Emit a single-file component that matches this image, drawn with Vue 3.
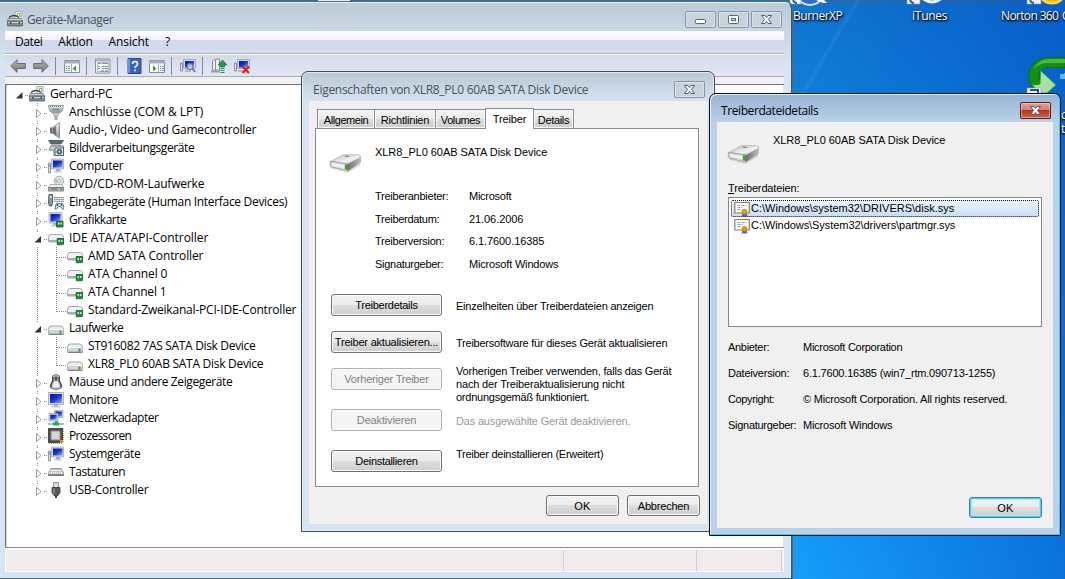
<template>
  <div class="desktop">
    <svg class="wallpaper" width="1065" height="579">
      <path d="M800 93 L856 0 L860 0 L806 93Z" fill="#fff" opacity=".05" />
      <path d="M318 0h32v2h-32z" fill="#e8ecf0" />
      <!-- cut off shortcut icons -->
      <circle cx="810" cy="-9" r="14" fill="#2a6fd0" stroke="#dfe8f4" stroke-width="2" />
      <path d="M816 0h8l3 3-4 0z" fill="#fff" />
      <circle cx="932" cy="-11" r="13" fill="#3f8be0" stroke="#eef3f8" stroke-width="3" />
      <circle cx="1052" cy="-11" r="14" fill="#f0b400" stroke="#ffd84a" stroke-width="3" />
      <g fill="#f4f6f8" stroke="#8c99a8" stroke-width=".6">
        <path d="M790 -8h11v12h-11z M907 -8h13v12h-13z M1027 -8h14v12h-14z" />
      </g>
      <path d="M910 0q1 3 4 3 M1030 0q1 3 4 3 M793 0q1 3 4 3" stroke="#2a5fa8" stroke-width="2" fill="none" />
      <!-- green arrow -->
      <path d="M1065 57.500h-14c-14 0-22 7-22 19 0 7 3 12 8 15l4 1 14-7-15-13-1 8c-2-5 0-13 8-13h18z" fill="#159114" stroke="#0d6a0e" stroke-width=".8" />
      <path d="M1065 59h-14c-9 0-15 4-17 10 5-5 9-6 16-6h15z" fill="#63c94b" opacity=".7" />
      <path d="M1040.500 70.500l15.500 14.500-9 8h-9l-6-9q3 2 8 0z" fill="#a9dfa6" stroke="#1d9a1a" stroke-width=".8" />
      <path d="M1060 74q2 1 5-1v6h-5z" fill="#69b8f4" />
      <path d="M1027 88h14v8h-14z" fill="#f4f6f8" stroke="#8c99a8" stroke-width=".6" />
      <path d="M1030 90h8v3" fill="none" stroke="#1f4f96" stroke-width="2" />
    </svg>
    <span class="shortcut s1" v-fit="49">BurnerXP</span>
    <span class="shortcut s2" v-fit="35">iTunes</span>
    <span class="shortcut s3" v-fit="57">Norton 360</span>
    <span class="shortcut s4">C</span>
    <span class="shortcut s5">c</span>
    <span class="shortcut s6">t</span>

    <!-- Geräte-Manager -->
    <div class="window manager">
      <div class="titlebar">
        <svg class="ico" width="16" height="16"><use href="#i-pc" /></svg>
        <span class="title" v-fit="86">Geräte-Manager</span>
        <div class="caption">
          <span class="cbtn"><svg width="31" height="17"><rect x="10.500" y="8.500" width="10" height="4" rx="1" fill="#fff" stroke="#5a6372" /></svg></span>
          <span class="cbtn"><svg width="31" height="17"><rect x="10.500" y="4.500" width="10" height="8" rx="1" fill="#fff" stroke="#5a6372" /><rect x="13.500" y="7.500" width="4" height="2" fill="#dfe7ef" stroke="#5a6372" /></svg></span>
          <span class="cbtn"><svg width="31" height="17"><use href="#i-x" /></svg></span>
        </div>
      </div>
      <div class="menubar">
        <span v-for="m in menus" :key="m.t" v-fit="m.w">{{ m.t }}</span>
      </div>
      <div class="toolbar">
        <template v-for="(t, i) in tools" :key="i">
          <span v-if="t === '|'" class="sep"></span>
          <svg v-else class="tool" :class="t" width="16" height="16"><use :href="'#i-' + t" /></svg>
        </template>
      </div>
      <div class="treebox">
        <div v-for="n in tree" :key="n.t" class="node">
          <svg v-if="n.l === 0" width="22" height="18">
            <path d="M15.500 7v6.500h-6.500z" fill="#333" /><path d="M18 10.500h4" class="dots" />
          </svg>
          <svg v-else :width="n.l === 1 ? 41 : 60" height="18">
            <path v-if="!n.end" d="M30.500 0v18" class="dots" />
            <path v-if="n.end && n.l === 1" d="M30.500 0v8" class="dots" />
            <template v-if="n.l === 1">
              <path d="M27 4h8v13h-8z" fill="#fff" />
              <path v-if="n.open" d="M34 7v6.500h-6.500z" fill="#333" />
              <path v-else d="M29.500 6.500v8l4.500-4z" fill="#fff" stroke="#999" />
              <path d="M37 10.500h4" class="dots" />
            </template>
            <template v-else>
              <path :d="n.last ? 'M49.500 0v11' : 'M49.500 0v18'" class="dots" />
              <path d="M50 10.500h10" class="dots" />
            </template>
          </svg>
          <svg class="ico" width="16" height="18"><use :href="'#i-' + n.i" y="1" /></svg>
          <span class="label" v-fit="n.w">{{ n.t }}</span>
        </div>
      </div>
      <div class="statusbar"><i class="a"></i><i class="b"></i><i class="c"></i></div>
    </div>

    <!-- Eigenschaften -->
    <div class="window props">
      <div class="titlebar">
        <span class="title" v-fit="275">Eigenschaften von XLR8_PL0 60AB SATA Disk Device</span>
        <span class="cbtn"><svg width="31" height="17"><use href="#i-x" /></svg></span>
      </div>
      <div class="client">
        <div class="tabs">
          <span v-for="t in tabs" :key="t.t" class="tab" :class="[t.c, { active: t.on }]"><b v-fit="t.w">{{ t.t }}</b></span>
        </div>
        <div class="page">
          <div class="head">
            <svg width="34" height="20"><use href="#i-bigdrive" /></svg>
            <span v-fit="172">XLR8_PL0 60AB SATA Disk Device</span>
          </div>
          <div v-for="f in fields" :key="f.k" class="field">
            <span class="key"><b v-fit="f.kw">{{ f.k }}</b></span>
            <span v-fit="f.vw">{{ f.v }}</span>
          </div>
          <div class="actions">
            <template v-for="a in actions" :key="a.b">
              <button class="btn" :disabled="a.off"><b v-fit="a.w">{{ a.b }}</b></button>
              <div class="desc" :class="[a.c, { off: a.grey }]">
                <div v-for="d in a.d" :key="d.t"><b v-fit="d.w">{{ d.t }}</b></div>
              </div>
            </template>
          </div>
        </div>
        <div class="footer">
          <button class="btn"><b v-fit="16">OK</b></button>
          <button class="btn"><b v-fit="51">Abbrechen</b></button>
        </div>
      </div>
    </div>

    <!-- Treiberdateidetails -->
    <div class="window details">
      <div class="titlebar">
        <span class="title" v-fit="97">Treiberdateidetails</span>
        <span class="cbtn red"><svg width="31" height="17"><use href="#i-x" /></svg></span>
      </div>
      <div class="client">
        <div class="head">
          <svg width="34" height="20"><use href="#i-bigdrive" /></svg>
          <span v-fit="172">XLR8_PL0 60AB SATA Disk Device</span>
        </div>
        <div class="listlabel"><span v-fit="71"><u>T</u>reiberdateien:</span></div>
        <div class="filelist">
          <div v-for="f in files" :key="f.t" class="file" :class="{ selected: f.sel }">
            <svg width="16" height="16"><use href="#i-cert" /></svg>
            <span v-fit="f.w">{{ f.t }}</span>
          </div>
        </div>
        <div v-for="f in info" :key="f.k" class="field">
          <span class="key"><b v-fit="f.kw">{{ f.k }}</b></span>
          <span v-fit="f.vw">{{ f.v }}</span>
        </div>
        <div class="footer">
          <button class="btn default"><b v-fit="16">OK</b></button>
        </div>
      </div>
    </div>

    <!-- icon sprite -->
    <svg class="sprite" width="0" height="0">
      <defs>
        <linearGradient id="g-metal" x1="0" y1="0" x2="0" y2="1"><stop offset="0" stop-color="#f4f4f4" /><stop offset="1" stop-color="#8f9396" /></linearGradient>
        <linearGradient id="g-screen" x1="0" y1="0" x2="1" y2="1"><stop offset="0" stop-color="#0812a0" /><stop offset=".5" stop-color="#1c35d0" /><stop offset="1" stop-color="#8fb0f4" /></linearGradient>
        <linearGradient id="g-arrow" x1="0" y1="0" x2="0" y2="1"><stop offset="0" stop-color="#bdbdbd" /><stop offset="1" stop-color="#6e6e6e" /></linearGradient>

        <symbol id="i-x" viewBox="0 0 31 17">
          <path d="M10.500 4.500h3.500l1.500 2 1.500-2h3.500l-3 4 3 4h-3.500l-1.500-2-1.500 2h-3.500l3-4z" fill="#fff" stroke="#535b69" />
        </symbol>
        <symbol id="i-pc" viewBox="0 0 16 16">
          <path d="M8 .5h6v7h-6z" fill="#f3f6ee" stroke="#a8aca6" /><path d="M10 2h3v4h-3z" fill="#8fbe62" /><path d="M11 3h1v4h-1z" fill="#fff" />
          <path d="M2 6.500q5-4 10 0" fill="none" stroke="#40464a" stroke-width="1.300" />
          <path d="M1 7.500h13l1.500 2.500H.5z" fill="#c6cbce" stroke="#7b8286" stroke-width=".8" />
          <path d="M.5 10h15v5H.5z" fill="#81898e" stroke="#596166" stroke-width=".8" />
          <path d="M1 11.500h14" stroke="#cfd4d7" /><path d="M3 11h1.500v2H3zM11.500 11H13v2h-1.500z" fill="#4c5459" />
        </symbol>
        <symbol id="i-port" viewBox="0 0 16 16">
          <path d="M.5 1.500h15l-1 5-2 2h-9l-2-2z" fill="url(#g-metal)" stroke="#8d9498" stroke-width=".9" />
          <path d="M2 2.500h12" stroke="#697074" stroke-dasharray="1 1" /><path d="M4 4.500h8l-.5 2h-7z" fill="#7f8d96" />
          <path d="M5 8.500h6l-1.500 4h-3z" fill="#c3c8cb" stroke="#8d9498" stroke-width=".8" /><path d="M6.500 12.500h3V16h-3z" fill="#a3a8ab" />
        </symbol>
        <symbol id="i-speaker" viewBox="0 0 16 16">
          <path d="M2 5.500h2.500v6H2z" fill="#6d7377" /><path d="M4.500 5.500L11.500.5v15.500l-7-4.500z" fill="url(#g-metal)" stroke="#83888c" stroke-width=".8" />
          <path d="M5 6l3-2v9l-3-2z" fill="#4c5256" opacity=".7" />
        </symbol>
        <symbol id="i-camera" viewBox="0 0 16 16">
          <path d="M.5.500h15l-2.500 3.500h-10z" fill="#5d6a72" stroke="#49545b" stroke-width=".8" /><path d="M3 4.500h10v1.500H3z" fill="#b2bac0" />
          <path d="M3 6h12.500v9.500H6V10H1z" fill="#d5dade" stroke="#69757c" stroke-width=".9" /><path d="M7 8h8.500v7.500H7z" fill="#e1e6ea" stroke="#56646d" />
          <circle cx="11.300" cy="11.700" r="2.700" fill="#445c6d" /><circle cx="11.300" cy="11.700" r="1.100" fill="#b8d7ec" />
        </symbol>
        <symbol id="i-computer" viewBox="0 0 16 16">
          <path d="M.5 5h2v10h-2z" fill="#dfe3e6" stroke="#7f878d" stroke-width=".8" /><path d="M1 6.500h1.500v2H1z" fill="#3fae45" />
          <path d="M3.500 1h12v10h-12z" fill="#d4dae2" stroke="#a2abb6" stroke-width=".8" /><path d="M5 2.500h9.500v7H5z" fill="url(#g-screen)" />
          <path d="M8 11h4v2H8z" fill="#a5abb1" /><path d="M6 13h8v1.500H6z" fill="#c9ced3" />
        </symbol>
        <symbol id="i-dvd" viewBox="0 0 16 16">
          <circle cx="11" cy="5" r="4.700" fill="#dce3df" stroke="#98a29d" stroke-width=".8" /><circle cx="11" cy="5" r="1.500" fill="#fff" stroke="#8d9691" stroke-width=".6" /><path d="M7 3l3 1.500L8 7z" fill="#93c884" />
          <path d="M2 8.500h12l1.500 3H.5z" fill="#eceeee" stroke="#969c9d" stroke-width=".7" /><path d="M.5 11.500h15v3.500H.5z" fill="#b7bcbd" stroke="#6f7778" stroke-width=".9" />
          <path d="M2.500 13h7" stroke="#545c5d" /><path d="M12.500 12h1.500v2h-1.500z" fill="#35a336" />
        </symbol>
        <symbol id="i-hid" viewBox="0 0 16 16">
          <path d="M1 .5h3.500v9l-1 2.500h-2L.5 9z" fill="#93999d" stroke="#464d52" stroke-width=".9" /><path d="M2 2h1.500v2H2z" fill="#eee" />
          <path d="M6 3h10v5H6z" fill="#dfe2e4" /><path d="M6 3.500h10M6 5.500h10M6 7.500h10" stroke="#747b80" stroke-dasharray="1.500 .8" stroke-width=".9" />
          <path d="M7 15l1-5q1-1.500 2.500-.5h2q2-1 2.500.5l1 5q-1.500 1-2.500-1l-1-1.500h-2l-1 1.500q-1 2-2.500 1z" fill="#d0e3ec" stroke="#567080" stroke-width=".9" /><circle cx="9.500" cy="11" r=".9" fill="#345" /><circle cx="13.500" cy="11" r=".9" fill="#345" />
        </symbol>
        <symbol id="i-chip" viewBox="0 0 8 8">
          <path d="M.5.500h6.500v6H.5z" fill="#1f8b4b" stroke="#0e5c30" stroke-width=".8" /><path d="M2 2h1.500v2H2zM4.500 2H6v2H4.500z" fill="#bff0c8" /><path d="M1 7.300h5" stroke="#d6b84a" stroke-dasharray="1 .6" />
        </symbol>
        <symbol id="i-gpu" viewBox="0 0 16 16">
          <path d="M1 .5h13v10.500H1z" fill="#d4dae2" stroke="#a2abb6" stroke-width=".8" /><path d="M2.500 2h10v7.500h-10z" fill="url(#g-screen)" />
          <path d="M5 11h4v2H5z" fill="#a5abb1" /><path d="M3 13h7v1.500H3z" fill="#c9ced3" /><use href="#i-chip" x="8" y="8.500" width="8" height="8" />
        </symbol>
        <symbol id="i-ide" viewBox="0 0 16 16">
          <path d="M3 4.500h10.500q2 .5 2 3v3.500q0 1-1 1H1.500q-1 0-1-1V7.500q0-3 2.500-3z" fill="#f0f1f1" stroke="#999fa1" stroke-width=".9" />
          <path d="M1 10h14v2H1z" fill="#a7adaf" /><use href="#i-chip" x="8.500" y="8" width="8" height="8" />
        </symbol>
        <symbol id="i-drive" viewBox="0 0 16 16">
          <path d="M3 6h10q2.500.5 2.500 3.500v4q0 1-1 1H1.500q-1 0-1-1V9.500q0-3.500 2.500-3.500z" fill="#ececec" stroke="#999ea0" stroke-width=".9" />
          <path d="M.8 9.500h14.500v4.200H.8z" fill="#d3d6d7" /><path d="M.8 9.500h14.500" stroke="#fff" stroke-width=".7" /><path d="M.7 14.200h14.600" stroke="#6d7375" /><path d="M11.500 10.500h2v3h-2z" fill="#3c9b36" />
        </symbol>
        <symbol id="i-mouse" viewBox="0 0 16 16">
          <path d="M4.500 2Q8-1 11.500 2v5q3 4 2 7-5.500 3-11 0-1-3 2-7z" fill="#c5c9cc" stroke="#6b7175" /><path d="M6.500 2.500h3v4h-3z" fill="#4b5155" /><path d="M5 3v4q-3 4-1.500 6M11 3v4q3 4 1.500 6" stroke="#34393c" stroke-width="1.200" fill="none" /><path d="M6 8h4l1 5H5z" fill="#f3f4f5" />
        </symbol>
        <symbol id="i-monitor" viewBox="0 0 16 16">
          <path d="M.5.500h15v12H.5z" fill="#d9dde2" stroke="#9aa2ac" stroke-width=".8" /><path d="M2 2h12v9H2z" fill="url(#g-screen)" /><path d="M6 12.500h4v1.500H6z" fill="#a5abb1" /><path d="M3.500 14h9v1.500h-9z" fill="#c3c8cd" />
        </symbol>
        <symbol id="i-net" viewBox="0 0 16 16">
          <path d="M6.500.500h8.500v7H6.500z" fill="#d9dde2" stroke="#9aa2ac" stroke-width=".8" /><path d="M7.500 1.500H14v5H7.500z" fill="url(#g-screen)" />
          <path d="M1 3.500h9v7.500H1z" fill="#e3e7eb" stroke="#9aa2ac" stroke-width=".8" /><path d="M2.200 4.700h6.600v5H2.200z" fill="url(#g-screen)" />
          <path d="M7 11h2.500v2H7z" fill="#2b9f6c" /><path d="M0 14h16" stroke="#8fd0b2" stroke-width="2" /><path d="M5 12.500h6v3H5z" fill="#23a36a" />
        </symbol>
        <symbol id="i-cpu" viewBox="0 0 16 16">
          <path d="M0 0h15v15H0z" fill="#4b4b4b" /><path d="M1 15.500h14M15.500 1v14" stroke="#bd9a45" stroke-dasharray="1 1" /><path d="M3 3h9v9H3z" fill="#d4d4d4" stroke="#8b8b8b" /><path d="M12 12h3v3h-3z" fill="#d39a2c" />
        </symbol>
        <symbol id="i-keyboard" viewBox="0 0 16 16">
          <path d="M3 4.500h10l2.500 4v3H.5v-3z" fill="#eceded" stroke="#8c9194" stroke-width=".9" /><path d="M3.500 5.500h9.500M2.500 7.500h11.500M2 9.200h12.500" stroke="#9a9fa2" stroke-dasharray="1 1" /><path d="M.5 11h15" stroke="#666c6f" stroke-width="1.500" />
        </symbol>
        <symbol id="i-usb" viewBox="0 0 16 16">
          <path d="M5.500.500h5v5h-5z" fill="#dedede" stroke="#969696" /><path d="M4 5.500h8v5l-2 3H6l-2-3z" fill="#575757" stroke="#3b3b3b" stroke-width=".8" /><path d="M7 13h2v3H7z" fill="#3d3d3d" /><path d="M5 6.500h2v5H5z" fill="#9a9a9a" opacity=".7" />
        </symbol>
        <symbol id="i-back" viewBox="0 0 16 16"><path d="M.7 8L7 1.700v3.800h8.300v5H7v3.800z" fill="url(#g-arrow)" stroke="#6d6d6d" /></symbol>
        <symbol id="i-fwd" viewBox="0 0 16 16"><path d="M15.300 8L9 1.700v3.800H.7v5H9v3.800z" fill="url(#g-arrow)" stroke="#6d6d6d" /></symbol>
        <symbol id="i-tree" viewBox="0 0 16 16">
          <path d="M.5 2.500h15v12H.5z" fill="#fbfcfc" stroke="#858c92" /><path d="M0 4h16" stroke="#a6acb0" stroke-width="3" /><path d="M7.500 6v8" stroke="#a6acb0" /><path d="M2 8.500h4M2 10.500h4M2 12.500h4" stroke="#5f88a9" stroke-dasharray="1 1 2" /><path d="M12 7.500v6L8.500 10.500z" fill="#3aa52f" />
        </symbol>
        <symbol id="i-pane" viewBox="0 0 16 16">
          <path d="M.5 2.500h15v12H.5z" fill="#fbfcfc" stroke="#858c92" /><path d="M0 4h16" stroke="#a6acb0" stroke-width="3" /><path d="M9.500 6v8" stroke="#a6acb0" /><path d="M11 8.500h4M11 10.500h4M11 12.500h4" stroke="#5f88a9" stroke-dasharray="1 1 2" /><path d="M4 7.500v6l3.500-3z" fill="#3aa52f" />
        </symbol>
        <symbol id="i-sheet" viewBox="0 0 16 16">
          <path d="M.5 1h14.500v14H.5z" fill="#f7f8f9" stroke="#8b9298" /><path d="M1 2.500h13.500" stroke="#a9afb4" stroke-width="2" /><path d="M3 5.500h3M7 5.500h6M3 8.500h2M7 8.500h6M3 10.500h2M7 10.500h6" stroke="#699bc0" /><path d="M2.500 4.500h11v9h-11z" fill="none" stroke="#b6bcc1" /><path d="M6 13h3M10 13h3" stroke="#8b9298" stroke-width="1.500" />
        </symbol>
        <symbol id="i-help" viewBox="0 0 16 16">
          <path d="M1 .5h13v15H1z" fill="#3c62c4" stroke="#2b4794" /><path d="M2 1v14" stroke="#88a4e4" stroke-width="1.500" /><path d="M5.500 6q0-2.500 2.500-2.500T10.500 6q0 1.200-1.300 2T8 10M8 11.500v1.800" fill="none" stroke="#fff" stroke-width="1.600" />
        </symbol>
        <symbol id="i-scan" viewBox="0 0 16 16">
          <path d="M.5 5h2v8h-2z" fill="#dfe3e6" stroke="#7f878d" stroke-width=".9" /><path d="M3.500 1.500h12v9h-12z" fill="#d4dae2" stroke="#a3acb6" /><path d="M5 3h9v6.500H5z" fill="url(#g-screen)" /><path d="M5 13h6" stroke="#a5abb1" stroke-width="1.500" />
          <circle cx="10" cy="8.500" r="3" fill="#cfe4f7" fill-opacity=".7" stroke="#66788a" stroke-width="1.100" /><path d="M12.200 10.700l3 3.300" stroke="#6f7b86" stroke-width="1.800" />
        </symbol>
        <symbol id="i-update" viewBox="0 0 16 16">
          <path d="M1.500 3q2-2.500 7-2v11h-7z" fill="#eef0f1" stroke="#858d92" /><path d="M4.500 2v10" stroke="#858d92" /><path d="M0 13.500h9" stroke="#959da1" stroke-width="2" />
          <path d="M11.500 2l4.500 5h-2.500v2h-4V7H7z" fill="#1f9c55" stroke="#0f6c36" stroke-width=".6" /><path d="M9.500 10.500h4M9.500 12.500h4M9.500 14.500h4" stroke="#1f9c55" />
        </symbol>
        <symbol id="i-remove" viewBox="0 0 16 16">
          <path d="M.5 5h2v8h-2z" fill="#dfe3e6" stroke="#7f878d" stroke-width=".9" /><path d="M3.500 1.500h12v9h-12z" fill="#d4dae2" stroke="#a3acb6" /><path d="M5 3h9v6.500H5z" fill="url(#g-screen)" /><path d="M4 13h6" stroke="#a5abb1" stroke-width="1.500" />
          <path d="M8.500 8.500l6.500 6.500M15 8.500l-6.500 6.500" stroke="#e0201c" stroke-width="2.200" />
        </symbol>
        <symbol id="i-cert" viewBox="0 0 16 16">
          <path d="M.8 1.500h14.500v10.500H.8z" fill="#fffefa" stroke="#9b7b5a" stroke-width="1.200" /><path d="M3.500 4.500h9M3.500 6.500h5M3.500 8.500h4" stroke="#8b9bb8" stroke-dasharray="3 1" /><path d="M8.500 12l-1 4 2-1 1 1 1-1 2 1-1-4z" fill="#3b6bc4" /><circle cx="10.500" cy="10.800" r="2.600" fill="#dca11a" stroke="#a8740c" stroke-width=".6" />
        </symbol>
        <linearGradient id="g-top" x1="0" y1="0" x2="1" y2="1"><stop offset="0" stop-color="#b5b5b5" /><stop offset=".6" stop-color="#f4f4f4" /><stop offset="1" stop-color="#b5b5b5" /></linearGradient>
        <linearGradient id="g-side" x1="0" y1="0" x2="1" y2="0"><stop offset="0" stop-color="#707070" /><stop offset="1" stop-color="#bdbdbd" /></linearGradient>
        <symbol id="i-bigdrive" viewBox="0 0 34 20">
          <path d="M2 14l16 4.500 13-8v2L18.500 20 2 15.500z" fill="#999" opacity=".35" />
          <path d="M1.500 8.500L13 2.500q1.500-.8 3-.8h13q2 .3 3 2.300L19 11z" fill="url(#g-top)" stroke="#a4a4a4" stroke-width=".6" />
          <path d="M1.300 9q0-.8 1-.6L19 11v7L2.300 14q-1-.3-1-1.200z" fill="#d6d6da" stroke="#8b8d90" stroke-width=".7" /><path d="M3 10l12 2v3.500L3 12.500z" fill="#f1f1f6" />
          <path d="M19 11l13-7v5q0 .8-.8 1.300L19 18z" fill="url(#g-side)" /><path d="M16 11.200l3 .4v5.400l-3-.8z" fill="#459c2c" /><ellipse cx="18" cy="3.200" rx="2.500" ry=".8" fill="#8b8b8b" />
        </symbol>
      </defs>
    </svg>
  </div>
</template>

<script setup>
// stretches or tightens a label to a fixed pixel width
const vFit = {
  mounted(el, { value }) {
    const n = el.textContent.length
    const w = el.getBoundingClientRect().width
    el.style.letterSpacing = ((value + 0.3 - w) / n).toFixed(3) + 'px'
  }
}

const menus = [
  { t: 'Datei', w: 27 },
  { t: 'Aktion', w: 34 },
  { t: 'Ansicht', w: 40 },
  { t: '?', w: 6 }
]

const tools = ['back', 'fwd', '|', 'tree', '|', 'sheet', '|', 'help', 'pane', '|', 'scan', '|', 'update', 'remove']

const tree = [
  { l: 0, i: 'pc', t: 'Gerhard-PC', w: 62 },
  { l: 1, i: 'port', t: 'Anschlüsse (COM & LPT)', w: 134 },
  { l: 1, i: 'speaker', t: 'Audio-, Video- und Gamecontroller', w: 187 },
  { l: 1, i: 'camera', t: 'Bildverarbeitungsgeräte', w: 125 },
  { l: 1, i: 'computer', t: 'Computer', w: 54 },
  { l: 1, i: 'dvd', t: 'DVD/CD-ROM-Laufwerke', w: 135 },
  { l: 1, i: 'hid', t: 'Eingabegeräte (Human Interface Devices)', w: 218 },
  { l: 1, i: 'gpu', t: 'Grafikkarte', w: 57 },
  { l: 1, i: 'ide', t: 'IDE ATA/ATAPI-Controller', w: 139, open: true },
  { l: 2, i: 'ide', t: 'AMD SATA Controller', w: 115 },
  { l: 2, i: 'ide', t: 'ATA Channel 0', w: 79 },
  { l: 2, i: 'ide', t: 'ATA Channel 1', w: 78 },
  { l: 2, i: 'ide', t: 'Standard-Zweikanal-PCI-IDE-Controller', w: 208, last: true },
  { l: 1, i: 'drive', t: 'Laufwerke', w: 54, open: true },
  { l: 2, i: 'drive', t: 'ST916082 7AS SATA Disk Device', w: 167 },
  { l: 2, i: 'drive', t: 'XLR8_PL0 60AB SATA Disk Device', w: 175, last: true },
  { l: 1, i: 'mouse', t: 'Mäuse und andere Zeigegeräte', w: 163 },
  { l: 1, i: 'monitor', t: 'Monitore', w: 49 },
  { l: 1, i: 'net', t: 'Netzwerkadapter', w: 89 },
  { l: 1, i: 'cpu', t: 'Prozessoren', w: 62 },
  { l: 1, i: 'computer', t: 'Systemgeräte', w: 71 },
  { l: 1, i: 'keyboard', t: 'Tastaturen', w: 56 },
  { l: 1, i: 'usb', t: 'USB-Controller', w: 79, end: true }
]

const tabs = [
  { t: 'Allgemein', w: 44, c: 't1' },
  { t: 'Richtlinien', w: 48, c: 't2' },
  { t: 'Volumes', w: 39, c: 't3' },
  { t: 'Treiber', w: 33, c: 't4', on: true },
  { t: 'Details', w: 31, c: 't5' }
]

const fields = [
  { k: 'Treiberanbieter:', kw: 73, v: 'Microsoft', vw: 42 },
  { k: 'Treiberdatum:', kw: 64, v: '21.06.2006', vw: 54 },
  { k: 'Treiberversion:', kw: 69, v: '6.1.7600.16385', vw: 75 },
  { k: 'Signaturgeber:', kw: 68, v: 'Microsoft Windows', vw: 89 }
]

const actions = [
  { b: 'Treiberdetails', w: 62, c: 'd1', d: [{ t: 'Einzelheiten über Treiberdateien anzeigen', w: 197 }] },
  { b: 'Treiber aktualisieren...', w: 103, c: 'd2', d: [{ t: 'Treibersoftware für dieses Gerät aktualisieren', w: 211 }] },
  {
    b: 'Vorheriger Treiber', w: 84, c: 'd3', off: true,
    d: [
      { t: 'Vorherigen Treiber verwenden, falls das Gerät', w: 215 },
      { t: 'nach der Treiberaktualisierung nicht', w: 168 },
      { t: 'ordnungsgemäß funktioniert.', w: 133 }
    ]
  },
  { b: 'Deaktivieren', w: 59, c: 'd4', off: true, grey: true, d: [{ t: 'Das ausgewählte Gerät deaktivieren.', w: 174 }] },
  { b: 'Deinstallieren', w: 62, c: 'd5', d: [{ t: 'Treiber deinstallieren (Erweitert)', w: 147 }] }
]

const files = [
  { t: 'C:\\Windows\\system32\\DRIVERS\\disk.sys', w: 203, sel: true },
  { t: 'C:\\Windows\\System32\\drivers\\partmgr.sys', w: 204 }
]

const info = [
  { k: 'Anbieter:', kw: 41, v: 'Microsoft Corporation', vw: 99 },
  { k: 'Dateiversion:', kw: 61, v: '6.1.7600.16385 (win7_rtm.090713-1255)', vw: 192 },
  { k: 'Copyright:', kw: 46, v: '© Microsoft Corporation. All rights reserved.', vw: 204 },
  { k: 'Signaturgeber:', kw: 68, v: 'Microsoft Windows', vw: 89 }
]
</script>

<style>
html, body {
  margin: 0;
  overflow: hidden;
}
</style>

<style scoped>
.desktop {
  position: relative;
  width: 1065px;
  height: 579px;
  overflow: hidden;
  font: 11px/13px "Liberation Sans", Arial, sans-serif;
  color: #000;
  white-space: nowrap;
  background:
    linear-gradient(90deg, rgba(0, 80, 200, 0) 74%, rgba(0, 70, 190, 0.5) 100%),
    linear-gradient(180deg, #2f6f9f 0, #0f76d0 5px, #1080da 100px, #0f90f2 400px, #169ffa 579px);
}
.desktop * {
  box-sizing: border-box;
}
b {
  font-weight: normal;
  display: inline-block;
}
svg {
  display: block;
  flex: none;
}
.wallpaper, .sprite {
  position: absolute;
  left: 0;
  top: 0;
}
.shortcut {
  position: absolute;
  color: #fff;
  font: 12px/16px "Open Sans", "Noto Sans", sans-serif;
  text-shadow: 1px 1px 2px #000, 0 1px 2px #000;
}
.s1 { left: 793px; top: 8px; }
.s2 { left: 912px; top: 8px; }
.s3 { left: 1001px; top: 8px; }
.s4 { left: 1062px; top: 8px; }
.s5, .s6 { left: 1061px; line-height: 14px; }
.s5 { top: 108px; }
.s6 { top: 122px; }

.window {
  position: absolute;
  display: flex;
  flex-direction: column;
}
.titlebar {
  display: flex;
  align-items: center;
  flex: none;
  font: 12px/16px "Open Sans", "Noto Sans", sans-serif;
  color: #4a525b;
}
.titlebar .title {
  display: inline-block;
}
.cbtn {
  display: block;
  width: 31px;
  height: 17px;
  margin-left: auto;
  border-radius: 2px;
  box-shadow: inset 0 0 0 1px #8796ab, inset 0 0 0 2px rgba(255, 255, 255, 0.35);
  background: #c6d3df;
}

/* device manager */
.manager {
  left: 0;
  top: 2px;
  width: 792px;
  height: 576px;
  padding: 0 8px 0 5px;
  background: linear-gradient(#bccbd8 0, #d7e4f1 60px, #d7e4f1);
  border-right: 1px solid #46525e;
  border-top: 1px solid #e9eff4;
  border-radius: 0 7px 0 0;
  box-shadow: 0 0 0 1px #52687a;
}
.manager .titlebar {
  height: 28px;
  padding-top: 5px;
  padding-left: 2px;
}
.manager .title {
  margin-left: 4px;
}
.manager .ico {
  margin-top: -1px;
}
.caption {
  display: flex;
  gap: 2px;
  margin: -1px 1px 0 auto;
}
.menubar {
  display: flex;
  height: 22px;
  margin-right: -1px;
  padding-left: 10px;
  gap: 16px;
  font: 12px/22px "Open Sans", "Noto Sans", sans-serif;
  background: linear-gradient(#fff 0, #f0f2f9 9px, #d4daed 9px, #d5dbee 100%);
}
.menubar span {
  flex: none;
}
.toolbar {
  display: flex;
  align-items: center;
  height: 24px;
  margin-right: -1px;
  padding: 2px 0 0 5px;
  border-top: 1px solid #aaaeb9;
  border-bottom: 1px solid #a9adb6;
  box-shadow: inset 0 1px #fff;
  background: linear-gradient(#d3d9ed, #e3e7f5);
}
.fwd { margin-left: 7px; }
.sep {
  width: 1px;
  height: 18px;
  margin: 0 8px 0 6px;
  background: #868d98;
}
.help { margin-left: 1px; }
.pane { margin-left: 6px; }
.remove { margin-left: 7px; }
.treebox {
  height: 471px;
  flex: none;
  margin-right: -1px;
  padding: 1px 0 0 1px;
  border-top: 7px solid #f0f0f0;
  background: #fff;
  box-shadow: inset 1px 1px #72767b, inset -1px -1px #e3e3e3, inset 2px 0 #d0d0d0;
}
.node {
  display: flex;
  height: 18px;
  padding-left: 1px;
  font: 12px/18px "Open Sans", "Noto Sans", sans-serif;
}
.node .ico {
  margin-left: 0;
}
.node .label {
  margin-left: 5px;
}
.dots {
  stroke: #8a8a8a;
  stroke-width: 1;
  stroke-dasharray: 1 1;
  fill: none;
}
.statusbar {
  display: flex;
  height: 24px;
  flex: none;
  margin-right: -1px;
  border: solid #fff;
  border-width: 2px 1px 1px;
  background: #f0eceb;
  box-shadow: 0 -1px #8a8c90;
}
.statusbar i {
  width: 1px;
  background: #d2cfce;
}
.statusbar .a { margin-left: 557px; }
.statusbar .b { margin-left: 132px; }
.statusbar .c { margin-left: 84px; }

/* buttons */
.btn {
  display: block;
  height: 22px;
  padding: 1px 0 0;
  border: 1px solid #707070;
  border-radius: 3px;
  font: inherit;
  color: #000;
  background: linear-gradient(#f2f2f2 0, #ebebeb 50%, #dddddd 50%, #cfcfcf 100%);
  box-shadow: inset 0 0 0 1px #fbfbfb;
}
.btn:disabled {
  border-color: #adb2b5;
  background: #f4f4f4;
  color: #838383;
}
.btn.default {
  border-color: #3c7fb1;
  box-shadow: inset 0 0 0 1px #48d0f5, inset 0 0 0 2px #a8e4f6;
}

/* properties */
.props {
  left: 301px;
  top: 71px;
  width: 414px;
  height: 461px;
  padding: 1px 7px 7px 7px;
  border: 1px solid #444d56;
  border-radius: 7px 7px 0 0;
  background: linear-gradient(#b9c8d5 0, #d7e4f1 30px, #d7e4f1);
  box-shadow: inset 0 0 0 1px #e3ebf3;
}
.props .titlebar {
  height: 28px;
  padding: 5px 2px 0 4px;
}
.props .cbtn {
  margin-top: -1px;
}
.props .client {
  display: flex;
  flex-direction: column;
  height: 423px;
  padding: 7px 7px 0 6px;
  background: #f0f0f0;
}
.tabs {
  display: flex;
  align-items: flex-end;
  height: 20px;
  padding-left: 2px;
}
.tab {
  height: 19px;
  border: 1px solid #898c95;
  border-bottom: 0;
  margin-right: -1px;
  background: linear-gradient(#f3f3f3 0, #ebebeb 50%, #dddddd 50%, #cdcdcd 100%);
  text-align: center;
  line-height: 20px;
  box-shadow: inset 0 0 0 1px #f8f8f8;
}
.t1 { width: 58px; }
.t2 { width: 62px; }
.t3 { width: 51px; }
.t4 { width: 49px; }
.t5 { width: 41px; }
.tab.active {
  position: relative;
  height: 21px;
  margin-bottom: -1px;
  background: #fff;
  box-shadow: none;
}
.page {
  height: 359px;
  flex: none;
  padding: 0 0 0 14px;
  margin-right: 1px;
  border: 1px solid #898c95;
  background: #fff;
}
.page .head {
  display: flex;
  align-items: flex-start;
  height: 56px;
  padding-top: 17px;
  margin-bottom: 1px;
}
.page .head svg {
  margin: 7px 0 0 -1px;
}
.page .head span {
  margin-left: 12px;
}
.page .field {
  display: flex;
  height: 22.700px;
  padding: 4px 0 0 45px;
}
.page .key {
  width: 94px;
}
.actions {
  display: grid;
  grid-template-columns: 111px auto;
  grid-template-rows: 37px 37px 41px 41px 22px;
  column-gap: 14px;
  margin-top: 17px;
  padding-left: 1px;
}
.desc { padding-top: 6px; }
.desc.d3 { padding: 0; margin-top: -3px; }
.desc.d5 { padding: 0; margin-top: -2px; }
.desc.off { color: #9a9a9a; }
.props .footer {
  display: flex;
  justify-content: flex-end;
  gap: 8px;
  padding-top: 8px;
}
.props .footer .btn {
  width: 73px;
  height: 21px;
}

/* driver file details */
.details {
  left: 709px;
  top: 93px;
  width: 352px;
  height: 443px;
  padding: 0 7px 7px 7px;
  border: 1px solid #0c1116;
  border-radius: 7px 7px 0 0;
  background: linear-gradient(#98b3d2 0, #b9d1ea 28px, #b9d1ea);
  box-shadow: inset 1px 1px #e6eff8, inset -1px -1px #3fd0e6;
}
.details .titlebar {
  height: 28px;
  padding: 6px 2px 0 4px;
  color: #000;
}
.details .cbtn {
  margin-top: -1px;
}
.cbtn.red {
  background: linear-gradient(#e5a99c 0, #d4796a 50%, #b8351c 50%, #cf6a50 100%);
  box-shadow: inset 0 0 0 1px #5b1f1a, inset 0 0 0 2px rgba(255, 220, 210, 0.5);
}
.details .client {
  height: 406px;
  padding: 12px 11px 0 11px;
  background: #f0f0f0;
}
.details .head {
  display: flex;
  align-items: flex-start;
  height: 48px;
}
.details .head svg {
  margin-top: 10px;
  margin-left: -1px;
}
.details .head span {
  margin-left: 12px;
}
.listlabel {
  height: 15px;
}
.filelist {
  height: 130px;
  margin-bottom: 14px;
  padding: 2px;
  border: 1px solid #828790;
  background: #fff;
}
.file {
  display: flex;
  align-items: center;
  height: 17px;
  padding-left: 3px;
}
.file span {
  margin-left: 1px;
}
.file.selected {
  outline: 1px dotted #111;
  outline-offset: -1px;
  border-radius: 2px;
  background: linear-gradient(#eff5fe, #c6dcf8);
}
.details .field {
  display: flex;
  height: 26px;
}
.details .key {
  width: 75px;
}
.details .footer {
  display: flex;
  justify-content: flex-end;
  padding-top: 52px;
}
.details .footer .btn {
  width: 73px;
  height: 21px;
}
</style>
